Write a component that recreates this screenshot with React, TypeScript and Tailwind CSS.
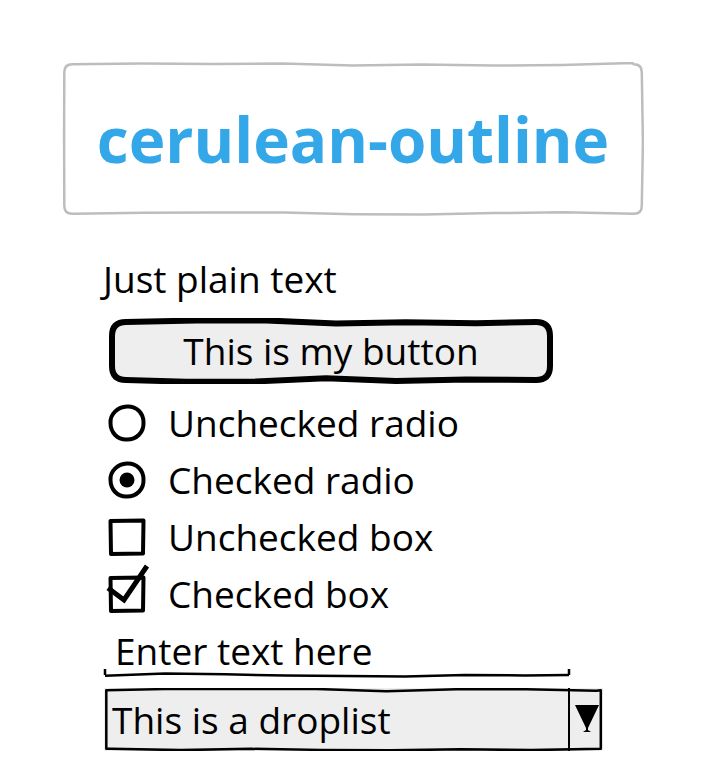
import React from 'react';

// deterministic jitter so the sketchy borders look the same every render
const jitter = (i: number, seed: number) => {
  const x = Math.sin(i * 12.9898 + seed * 78.233) * 43758.5453;
  return (x - Math.floor(x)) * 2 - 1;
};

const wobblyRect = (w: number, h: number, inset: number, r: number, amp: number, seed: number) => {
  const x0 = inset, y0 = inset, x1 = w - inset, y1 = h - inset;
  const step = 70;
  let k = 0;
  const j = () => jitter(k++, seed) * amp;
  const f = (n: number) => n.toFixed(1);
  let d = `M${f(x0 + r)} ${f(y0)}`;
  // top
  for (let x = x0 + r + step; x < x1 - r; x += step) d += ` L${f(x)} ${f(y0 + j())}`;
  d += ` L${f(x1 - r)} ${f(y0)} Q${f(x1)} ${f(y0)} ${f(x1)} ${f(y0 + r)}`;
  // right
  for (let y = y0 + r + step; y < y1 - r; y += step) d += ` L${f(x1 + j())} ${f(y)}`;
  d += ` L${f(x1)} ${f(y1 - r)} Q${f(x1)} ${f(y1)} ${f(x1 - r)} ${f(y1)}`;
  // bottom
  for (let x = x1 - r - step; x > x0 + r; x -= step) d += ` L${f(x)} ${f(y1 + j())}`;
  d += ` L${f(x0 + r)} ${f(y1)} Q${f(x0)} ${f(y1)} ${f(x0)} ${f(y1 - r)}`;
  // left
  for (let y = y1 - r - step; y > y0 + r; y -= step) d += ` L${f(x0 + j())} ${f(y)}`;
  d += ` L${f(x0)} ${f(y0 + r)} Q${f(x0)} ${f(y0)} ${f(x0 + r)} ${f(y0)} Z`;
  return d;
};

const wobblyLine = (w: number, y: number, amp: number, seed: number) => {
  const pts: string[] = [];
  let k = 0;
  for (let x = 2; x < w - 2; x += 60) {
    pts.push(`${x} ${(y + jitter(k++, seed) * amp).toFixed(1)}`);
  }
  pts.push(`${w - 2} ${y}`);
  return 'M' + pts.join(' L');
};

const SketchBox: React.FC<{
  w: number;
  h: number;
  stroke: string;
  sw: number;
  r: number;
  amp: number;
  seed: number;
  fill?: string;
}> = ({ w, h, stroke, sw, r, amp, seed, fill = 'none' }) => (
  <svg width={w} height={h} className="absolute inset-0 pointer-events-none" viewBox={`0 0 ${w} ${h}`}>
    <path
      d={wobblyRect(w, h, sw / 2 + 1, r, amp, seed)}
      fill={fill}
      stroke={stroke}
      strokeWidth={sw}
      strokeLinejoin="round"
      strokeLinecap="round"
    />
  </svg>
);

const RadioIcon = ({ checked }: { checked?: boolean }) => (
  <svg width="40" height="40" viewBox="0 0 40 40">
    <path
      d="M20 3.5 C29.5 3 36.5 10 36.5 19.5 C37 29.5 29.5 36.5 20 36.5 C10.5 37 3.5 29.5 3.5 20 C3 11 10.5 4 20 3.5 Z"
      fill="none"
      stroke="#000"
      strokeWidth="4"
    />
    {checked && <circle cx="20" cy="20" r="7.5" fill="#000" />}
  </svg>
);

const BoxIcon = ({ checked }: { checked?: boolean }) => (
  <svg width="40" height="40" viewBox="0 0 40 40" className="overflow-visible">
    <path d="M3.5 4 L36.5 3.5 L36 36.5 L4 37 Z" fill="none" stroke="#000" strokeWidth="4" strokeLinejoin="round" />
    {checked && (
      <path d="M1 14 L17 26 L40 -8" fill="none" stroke="#000" strokeWidth="5" strokeLinejoin="miter" />
    )}
  </svg>
);

const Row: React.FC<{ icon: React.ReactNode; label: string }> = ({ icon, label }) => (
  <div className="flex items-center h-[57px]">
    <div className="w-[65px] pl-[4px] flex items-center">{icon}</div>
    <span className="text-[37px] leading-[57px]">{label}</span>
  </div>
);

export default function App() {
  return (
    <div className="w-[712px] h-[784px] bg-white text-black font-['Open_Sans','Noto_Sans',sans-serif] overflow-hidden">
      {/* Title */}
      <div className="relative ml-[62px] mt-[62px] w-[582px] h-[154px] flex items-center justify-center">
        <SketchBox w={582} h={154} stroke="#bdbdbd" sw={2.5} r={8} amp={1.6} seed={3} />
        <span className="relative text-[62px] font-bold text-[#33a7e7]">cerulean-outline</span>
      </div>

      <div className="ml-[103px] flex flex-col">
        <div className="mt-[38px] text-[37px] leading-[50px]">Just plain text</div>

        {/* Button */}
        <div className="relative mt-[14px] ml-[5px] w-[446px] h-[66px] flex items-center justify-center">
          <SketchBox w={446} h={66} stroke="#000" sw={6} r={14} amp={2} seed={7} fill="#eeeeee" />
          <span className="relative text-[37px] leading-[50px]">This is my button</span>
        </div>

        {/* Radios & checks */}
        <div className="mt-[10px] flex flex-col">
          <Row icon={<RadioIcon />} label="Unchecked radio" />
          <Row icon={<RadioIcon checked />} label="Checked radio" />
          <Row icon={<BoxIcon />} label="Unchecked box" />
          <Row icon={<BoxIcon checked />} label="Checked box" />
        </div>

        {/* Text input */}
        <div className="relative mt-[4px] w-[468px] h-[56px]">
          <div className="pl-[12px] text-[37px] leading-[50px]">Enter text here</div>
          <svg width="468" height="16" viewBox="0 0 468 16" className="absolute left-0 top-[38px]">
            <path d={wobblyLine(468, 11, 1.4, 11)} fill="none" stroke="#000" strokeWidth="2.5" />
            <path d="M2 11 L2 5 M466 11 L466 5" stroke="#000" strokeWidth="2.5" />
          </svg>
        </div>

        {/* Droplist */}
        <div className="relative mt-[6px] ml-[1px] w-[499px] h-[63px] bg-[#eeeeee] flex items-center">
          <SketchBox w={499} h={63} stroke="#000" sw={2.5} r={0} amp={1.6} seed={5} />
          <span className="relative flex-1 pl-[8px] text-[37px] leading-[50px]">This is a droplist</span>
          <div className="relative w-[35px] h-full border-l-[2.5px] border-black flex items-center justify-center">
            <svg width="26" height="36" viewBox="0 0 26 36">
              <path d="M1 3 L25 3 L14 26 L14 28 L17 30 L9 30 L12 28 L12 26 Z" fill="#000" />
            </svg>
          </div>
        </div>
      </div>
    </div>
  );
}
